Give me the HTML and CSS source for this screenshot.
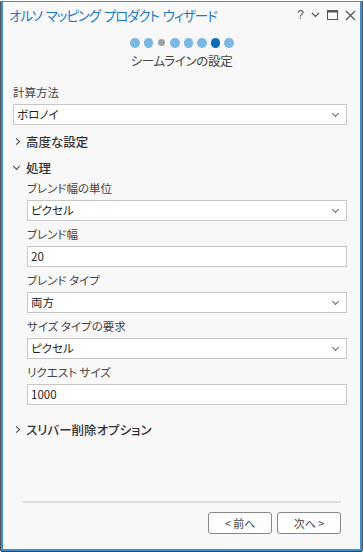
FILE: index.html
```html
<!DOCTYPE html>
<html lang="ja">
<head>
    <meta charset="UTF-8">
    <meta name="viewport" content="width=device-width, initial-scale=1.0">
    <title>オルソ マッピング プロダクト ウィザード</title>
    <link rel="stylesheet" href="styles.css">
</head>
<body>
    <div class="window">
        <header class="titlebar">
            <span class="title">オルソ マッピング プロダクト ウィザード</span>
            <div class="win-controls">
                <span class="help">?</span>
                <svg width="9" height="6" viewBox="0 0 9 6"><path d="M1 1 L4.5 4.5 L8 1" fill="none" stroke="#555" stroke-width="1.2"/></svg>
                <svg width="11" height="10" viewBox="0 0 11 10"><rect x="0.5" y="0.5" width="10" height="9" fill="none" stroke="#555"/><rect x="0.5" y="0.5" width="10" height="2" fill="#555"/></svg>
                <svg width="11" height="11" viewBox="0 0 11 11"><path d="M1 1 L10 10 M10 1 L1 10" stroke="#555" stroke-width="1.3"/></svg>
            </div>
        </header>

        <div class="steps">
            <span class="dot"></span>
            <span class="dot"></span>
            <span class="dot small"></span>
            <span class="dot"></span>
            <span class="dot"></span>
            <span class="dot"></span>
            <span class="dot current"></span>
            <span class="dot"></span>
        </div>
        <div class="step-title">シームラインの設定</div>

        <div class="content">
            <div class="field">
                <label>計算方法</label>
                <div class="select">ボロノイ</div>
            </div>

            <div class="section">
                <div class="section-head"><span class="chev right"></span>高度な設定</div>
            </div>

            <div class="section">
                <div class="section-head"><span class="chev down"></span>処理</div>
                <div class="section-body">
                    <div class="field">
                        <label>ブレンド幅の単位</label>
                        <div class="select">ピクセル</div>
                    </div>
                    <div class="field">
                        <label>ブレンド幅</label>
                        <div class="input">20</div>
                    </div>
                    <div class="field">
                        <label>ブレンド タイプ</label>
                        <div class="select">両方</div>
                    </div>
                    <div class="field">
                        <label>サイズ タイプの要求</label>
                        <div class="select">ピクセル</div>
                    </div>
                    <div class="field">
                        <label>リクエスト サイズ</label>
                        <div class="input">1000</div>
                    </div>
                </div>
            </div>

            <div class="section last">
                <div class="section-head"><span class="chev right"></span>スリバー削除オプション</div>
            </div>
        </div>

        <footer class="footer">
            <div class="buttons">
                <button>&lt; 前へ</button>
                <button>次へ &gt;</button>
            </div>
        </footer>
    </div>
</body>
</html>
```

FILE: styles.css
```css
html, body {
    margin: 0;
    height: 100%;
}
body {
    font-family: "Noto Sans CJK JP", "Noto Sans", sans-serif;
    font-feature-settings: "palt";
    color: #333;
    background: #fff;
}
.window {
    box-sizing: border-box;
    margin: 1px;
    height: 550px;
    border: 2px solid #3b8fd0;
    border-top-width: 1px;
    box-shadow: -1px 0 0 #555, 1px 0 0 #555, 0 1px 0 #444;
    background: #f8f8f8;
    display: flex;
    flex-direction: column;
}
.titlebar {
    display: flex;
    align-items: center;
    justify-content: space-between;
    padding: 1px 4px 0 6px;
    height: 24px;
}
.title {
    color: #1f78c1;
    font-size: 13.5px;
    letter-spacing: -1.1px;
    word-spacing: 2px;
}
.win-controls {
    display: flex;
    align-items: center;
    gap: 7px;
}
.help {
    font-family: "Liberation Sans", sans-serif;
    font-size: 12px;
    color: #555;
}
.steps {
    display: flex;
    justify-content: center;
    align-items: center;
    gap: 4px;
    margin-top: 11px;
    padding-left: 1px;
}
.dot {
    width: 9.5px;
    height: 9.5px;
    border-radius: 50%;
    background: #7db8e2;
}
.dot.small {
    width: 7px;
    height: 7px;
    background: #a0a0a0;
    margin: 0 1px;
}
.dot.current {
    background: #0f6cb6;
}
.step-title {
    text-align: center;
    font-size: 12.5px;
    color: #444;
    margin-top: 3px;
    letter-spacing: -0.3px;
}
.content {
    flex: 1;
    padding: 14px 13px 0 10px;
}
.field label {
    display: block;
    font-size: 11.5px;
    color: #444;
    line-height: 16px;
}
.select, .input {
    box-sizing: border-box;
    height: 21px;
    margin-top: 4px;
    background: #fff;
    border: 1px solid #c6c6c6;
    font-size: 11.5px;
    line-height: 19px;
    padding-left: 3px;
    color: #222;
    position: relative;
}
.select::after {
    content: "";
    position: absolute;
    right: 8px;
    top: 6px;
    width: 4px;
    height: 4px;
    border-right: 1.2px solid #666;
    border-bottom: 1.2px solid #666;
    transform: rotate(45deg);
}
.section-head {
    display: flex;
    align-items: center;
    font-size: 12.5px;
    font-weight: 500;
    color: #333;
    margin-top: 8px;
    line-height: 18px;
}
.section.last .section-head {
    margin-top: 16px;
}
.chev {
    width: 4px;
    height: 4px;
    border-right: 1.5px solid #444;
    border-bottom: 1.5px solid #444;
    margin: 0 7px 0 1px;
}
.chev.right {
    transform: rotate(-45deg);
}
.chev.down {
    transform: rotate(45deg);
    margin-top: -3px;
}
.section-body {
    padding-left: 14px;
}
.section-body .field {
    margin-top: 5px;
}
.section-body .field:first-child {
    margin-top: 3px;
}
.footer {
    padding: 0 19px 15px 20px;
}
.buttons {
    border-top: 2px solid #dedede;
    padding-top: 9px;
    display: flex;
    justify-content: flex-end;
    gap: 5px;
}
.buttons button {
    width: 64px;
    height: 22px;
    background: #fdfdfd;
    border: 1px solid #888;
    border-radius: 3px;
    font-family: inherit;
    font-size: 11px;
    color: #444;
    padding: 0;
}
```
